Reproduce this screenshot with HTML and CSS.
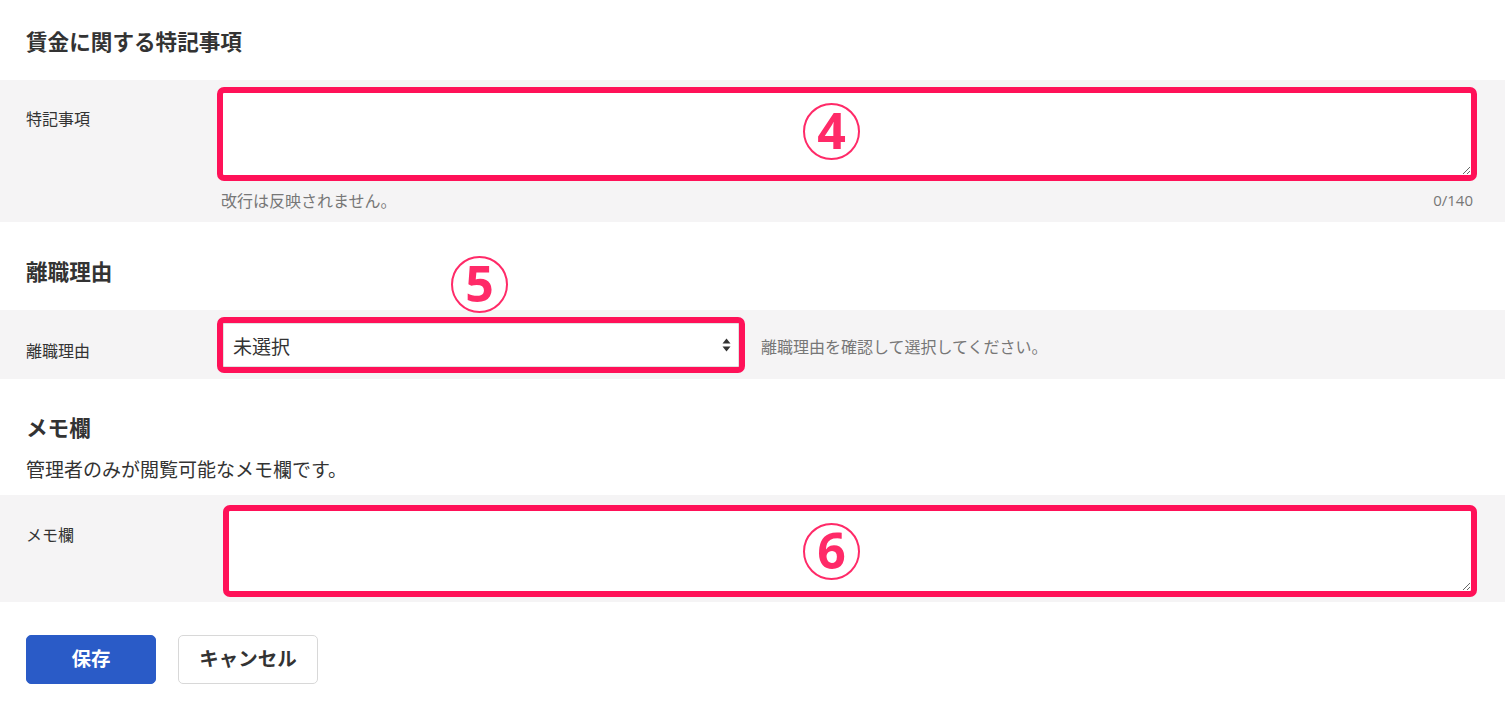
FILE: index.html
```html
<!DOCTYPE html>
<html lang="ja">
<head>
<meta charset="utf-8">
<title>特記事項</title>
<link rel="stylesheet" href="styles.css">
</head>
<body>
<div class="page">
  <section class="section">
    <h2 class="section-title">賃金に関する特記事項</h2>
    <div class="band band-special">
      <div class="label">特記事項</div>
      <div class="field">
        <div class="ta-wrap">
          <textarea class="ta ta-special"></textarea>
          <span class="marker marker-4">4</span>
        </div>
        <div class="hint-row">
          <span class="hint">改行は反映されません。</span>
          <span class="hint count">0/140</span>
        </div>
      </div>
    </div>
  </section>

  <section class="section">
    <h2 class="section-title title-reason">離職理由</h2>
    <div class="band band-reason">
      <div class="label label-reason">離職理由</div>
      <div class="field field-row">
        <div class="select-wrap">
          <select class="select">
            <option>未選択</option>
          </select>
          <svg class="select-arrow" width="9" height="14" viewBox="0 0 9 14"><path d="M4.5 0.5 L8.5 5.5 L0.5 5.5 Z M0.5 8.5 L8.5 8.5 L4.5 13.5 Z" fill="#333"/></svg>
          <span class="marker marker-5">5</span>
        </div>
        <span class="hint hint-inline">離職理由を確認して選択してください。</span>
      </div>
    </div>
  </section>

  <section class="section">
    <h2 class="section-title title-memo">メモ欄</h2>
    <p class="desc">管理者のみが閲覧可能なメモ欄です。</p>
    <div class="band band-memo">
      <div class="label label-memo">メモ欄</div>
      <div class="field field-memo">
        <div class="ta-wrap">
          <textarea class="ta ta-memo"></textarea>
          <span class="marker marker-6">6</span>
        </div>
      </div>
    </div>
  </section>

  <div class="actions">
    <button class="btn btn-primary">保存</button>
    <button class="btn btn-secondary">キャンセル</button>
  </div>
</div>
</body>
</html>
```

FILE: styles.css
```css
* { box-sizing: border-box; }
html, body { margin: 0; padding: 0; background: #fff; }
body {
  font-family: "Noto Sans CJK JP", "Noto Sans", sans-serif;
  color: #333;
}
.page { padding-top: 26px; }
.section-title {
  margin: 0 0 24px;
  padding-left: 26px;
  font-size: 21.6px;
  line-height: 30px;
  font-weight: bold;
  color: #333;
}
.title-reason { margin-top: 34px; }
.title-memo { margin-top: 33px; margin-bottom: 15px; }
.desc {
  margin: 0 0 14px;
  padding-left: 26px;
  font-size: 19px;
  line-height: 24px;
  color: #333;
}
.band {
  background: #f5f4f5;
  display: flex;
  padding: 0 28px 0 26px;
}
.band-special { padding-top: 7px; padding-bottom: 12px; }
.band-reason { padding-top: 7px; padding-bottom: 6px; }
.band-memo { padding-top: 10px; padding-bottom: 5px; }
.label {
  width: 191px;
  flex: none;
  font-size: 16px;
  line-height: 20px;
  padding-top: 21px;
  color: #333;
}
.label-reason { padding-top: 23px; }
.label-memo { padding-top: 19px; }
.field { flex: 1; min-width: 0; }
.field-memo { padding-left: 6px; }
.field-row { display: flex; align-items: center; gap: 16px; }
.ta-wrap { position: relative; }
.ta {
  display: block;
  width: 100%;
  border: 6px solid #ff1158;
  border-radius: 7px;
  background: #fff;
  resize: vertical;
  outline: none;
  font-family: inherit;
  font-size: 15px;
}
.ta-special { height: 94px; }
.ta-memo { height: 92px; }
.hint-row {
  display: flex;
  justify-content: space-between;
  padding-top: 9px;
  padding-left: 4px;
}
.hint {
  font-size: 16px;
  line-height: 20px;
  color: #777;
}
.count {
  font-family: "Open Sans", "Noto Sans", sans-serif;
  font-size: 15px;
  padding-right: 4px;
}
.select-wrap {
  position: relative;
  width: 528px;
  flex: none;
}
.select {
  display: block;
  width: 100%;
  height: 56px;
  appearance: none;
  -webkit-appearance: none;
  border: 6px solid #ff1158;
  border-radius: 7px;
  background: #fff;
  box-shadow: inset 0 0 0 1px #e2e2e2;
  padding: 0 30px 0 10px;
  font-family: inherit;
  font-size: 19px;
  color: #333;
  outline: none;
}
.select-arrow {
  position: absolute;
  right: 14px;
  top: 21px;
  pointer-events: none;
}
.hint-inline { padding-top: 2px; }
.marker {
  position: absolute;
  width: 57px;
  height: 57px;
  border: 2px solid #ff2a68;
  border-radius: 50%;
  background: #fff;
  color: #ff2a68;
  font-family: "Open Sans", "Noto Sans", sans-serif;
  font-weight: bold;
  font-size: 50px;
  line-height: 51px;
  text-align: center;
}
.marker-4 { left: 586px; top: 16px; }
.marker-5 { left: 234px; top: -61px; }
.marker-6 { left: 580px; top: 18px; }
.actions {
  display: flex;
  gap: 22px;
  padding: 33px 0 0 26px;
}
.btn {
  height: 49px;
  border-radius: 5px;
  font-family: inherit;
  font-size: 19.5px;
  font-weight: bold;
  line-height: 1;
  padding: 0 0 3px;
  cursor: pointer;
}
.btn-primary {
  width: 130px;
  background: #2a5bc7;
  border: 1px solid #2a5bc7;
  color: #fff;
}
.btn-secondary {
  width: 140px;
  background: #fff;
  border: 1px solid #d8d8d8;
  color: #333;
}
```
